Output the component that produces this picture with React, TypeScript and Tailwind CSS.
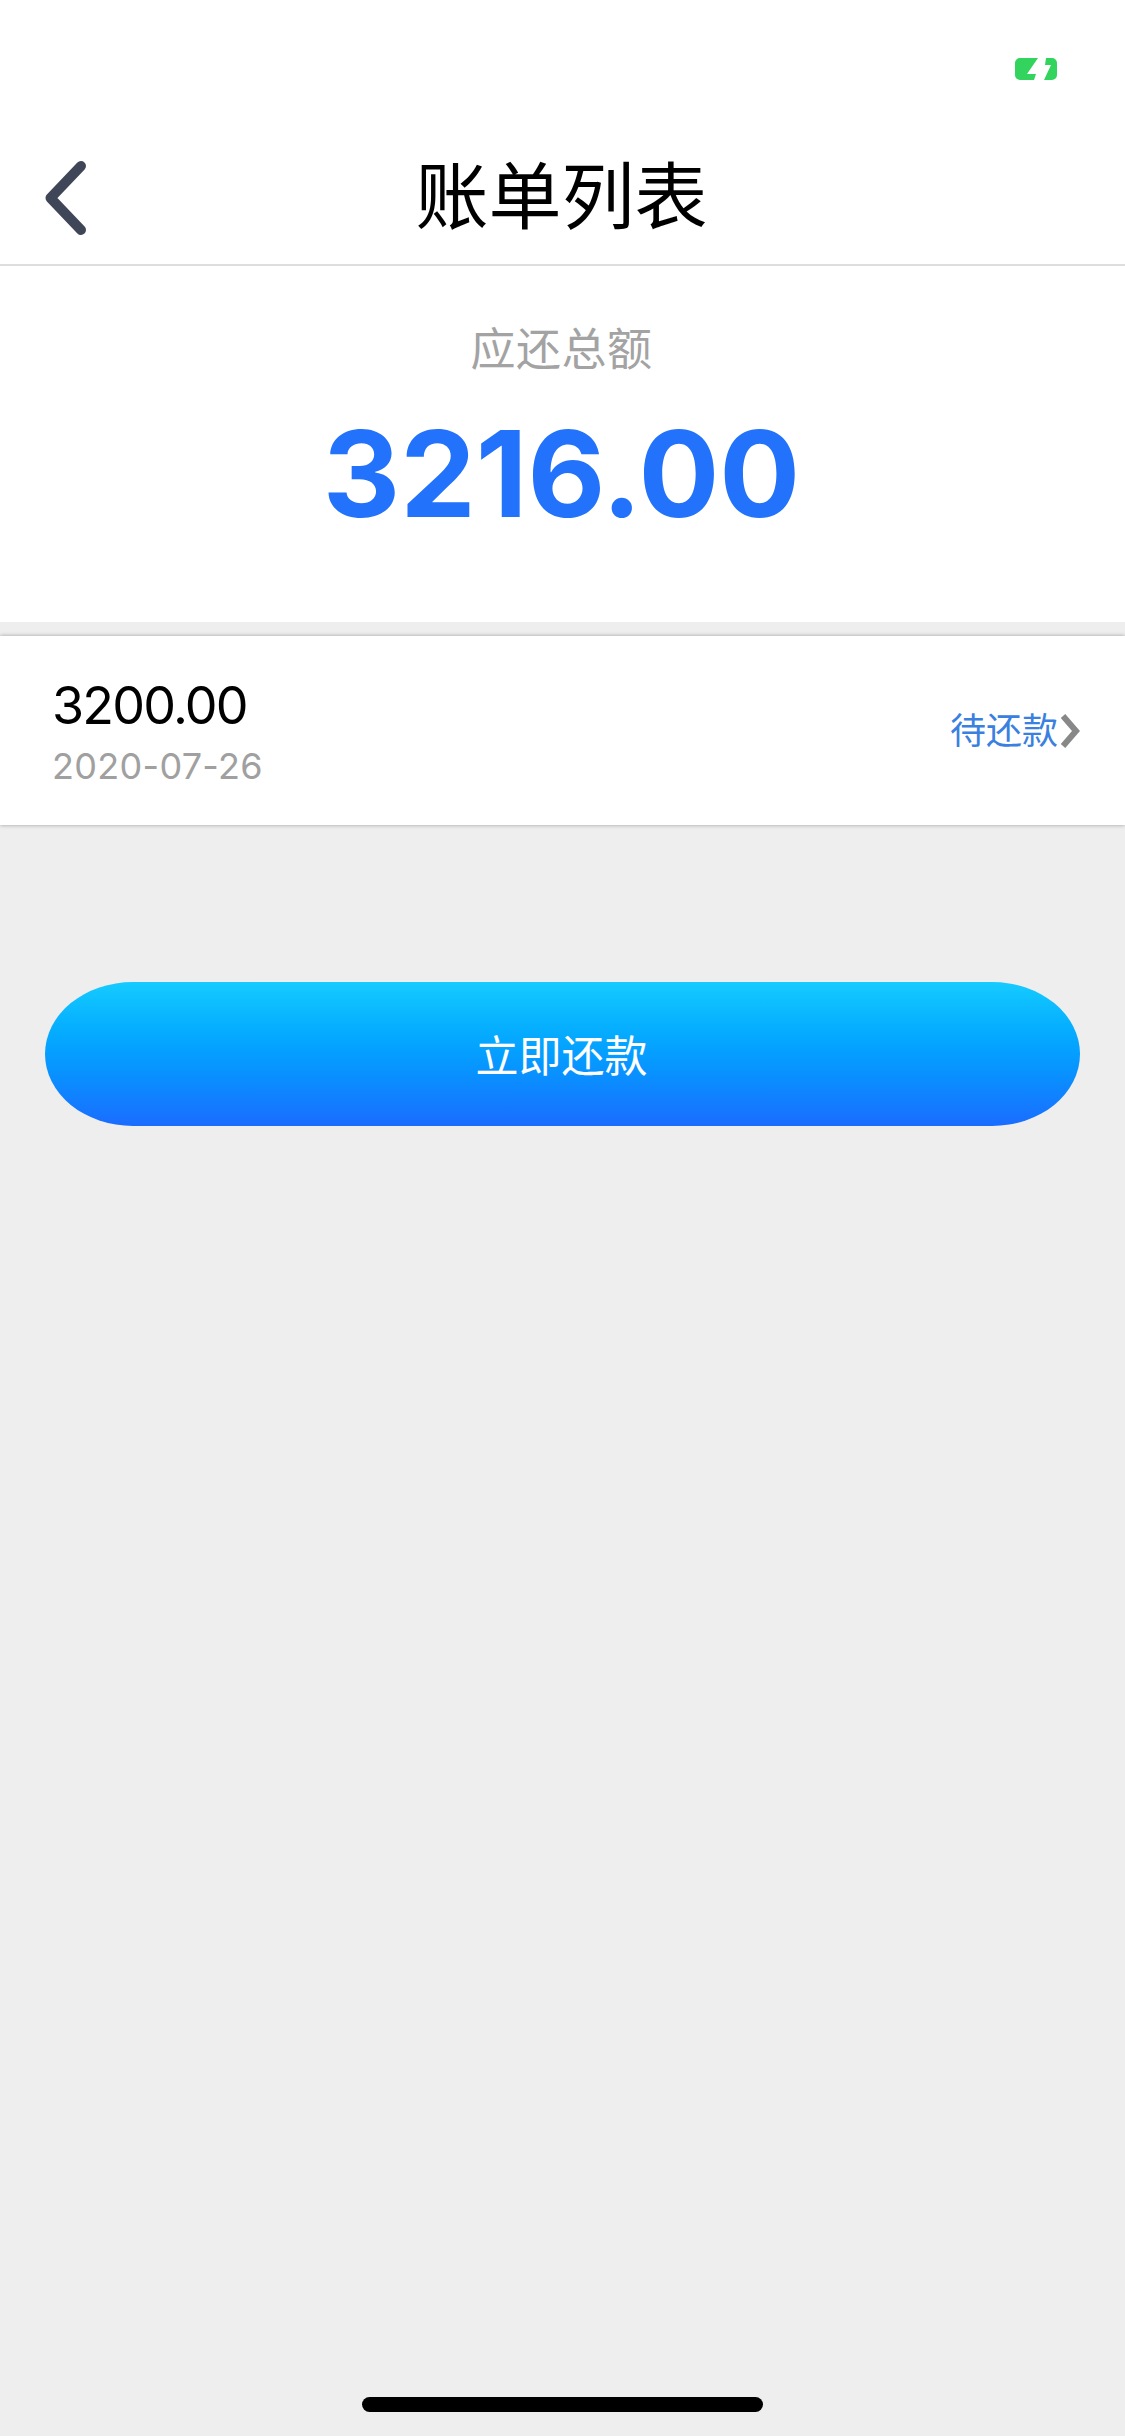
export default function App() {
  return (
    <div
      className="flex flex-col h-[2436px] w-[1125px] overflow-hidden bg-[#eeeeee]"
      style={{ fontFamily: '"Inter", "Noto Sans CJK SC", sans-serif' }}
    >
      <header className="bg-white border-b-2 border-[#dedede] h-[266px] flex flex-col">
        <div className="h-[135px] flex justify-end pt-[58px] pr-[68px]">
          <svg width="42" height="22" viewBox="0 0 42 22">
            <path d="M5 0H23L12 16H21L19 22H5A5 5 0 0 1 0 17V5A5 5 0 0 1 5 0Z" fill="#32d45e" />
            <path d="M31 0H37A5 5 0 0 1 42 5V17A5 5 0 0 1 37 22H29L36 7H30Z" fill="#32d45e" />
          </svg>
        </div>
        <div className="grid grid-cols-[1fr_auto_1fr] items-center flex-1 pl-[44px] pr-[46px] pb-[1px]">
          <svg width="44" height="78" viewBox="0 0 44 78" fill="none" className="-mt-[2px]">
            <path d="M37 7L6.500 39L37 71" stroke="#3f4657" strokeWidth="10" strokeLinecap="round" strokeLinejoin="round" />
          </svg>
          <div className="text-[73px] leading-[80px] text-black -mt-[4px]">账单列表</div>
          <div />
        </div>
      </header>

      <section className="bg-white h-[356px] flex flex-col items-center">
        <div className="text-[45px] leading-[60px] text-[#a3a3a3] mt-[54px] pr-[2px] tracking-[0.5px]">应还总额</div>
        <div className="text-[120px] leading-[130px] font-bold text-[#2272fb] mt-[29px] pr-[2px]">3216.00</div>
      </section>

      <section className="mt-[14px] bg-white h-[189px] flex items-center justify-between pl-[52px] pr-[45px] shadow-[0_0_4px_rgba(0,0,0,0.35)]">
        <div className="flex flex-col pt-[3px]">
          <div className="text-[52px] leading-[60px] text-black tracking-[-1.800px]">3200.00</div>
          <div className="text-[36px] leading-[44px] text-[#a0a0a0] mt-[8px] tracking-[0.3px]">2020-07-26</div>
        </div>
        <div className="flex items-center gap-[3px]">
          <span className="text-[36px] leading-[44px] text-[#3a80e0]">待还款</span>
          <svg width="19" height="36" viewBox="0 0 19 36" fill="none">
            <path d="M2 3L15 18L2 33" stroke="#888888" strokeWidth="6" />
          </svg>
        </div>
      </section>

      <button className="mt-[157px] mx-[45px] h-[144px] rounded-[88px/72px] bg-gradient-to-b from-[#16cbff] to-[#1a6cff] text-white text-[43px] flex items-center justify-center shrink-0 pt-[5px] pr-[2px]">
        立即还款
      </button>

      <div className="mt-auto mb-[24px] mx-auto w-[401px] h-[15px] rounded-full bg-black" />
    </div>
  );
}
